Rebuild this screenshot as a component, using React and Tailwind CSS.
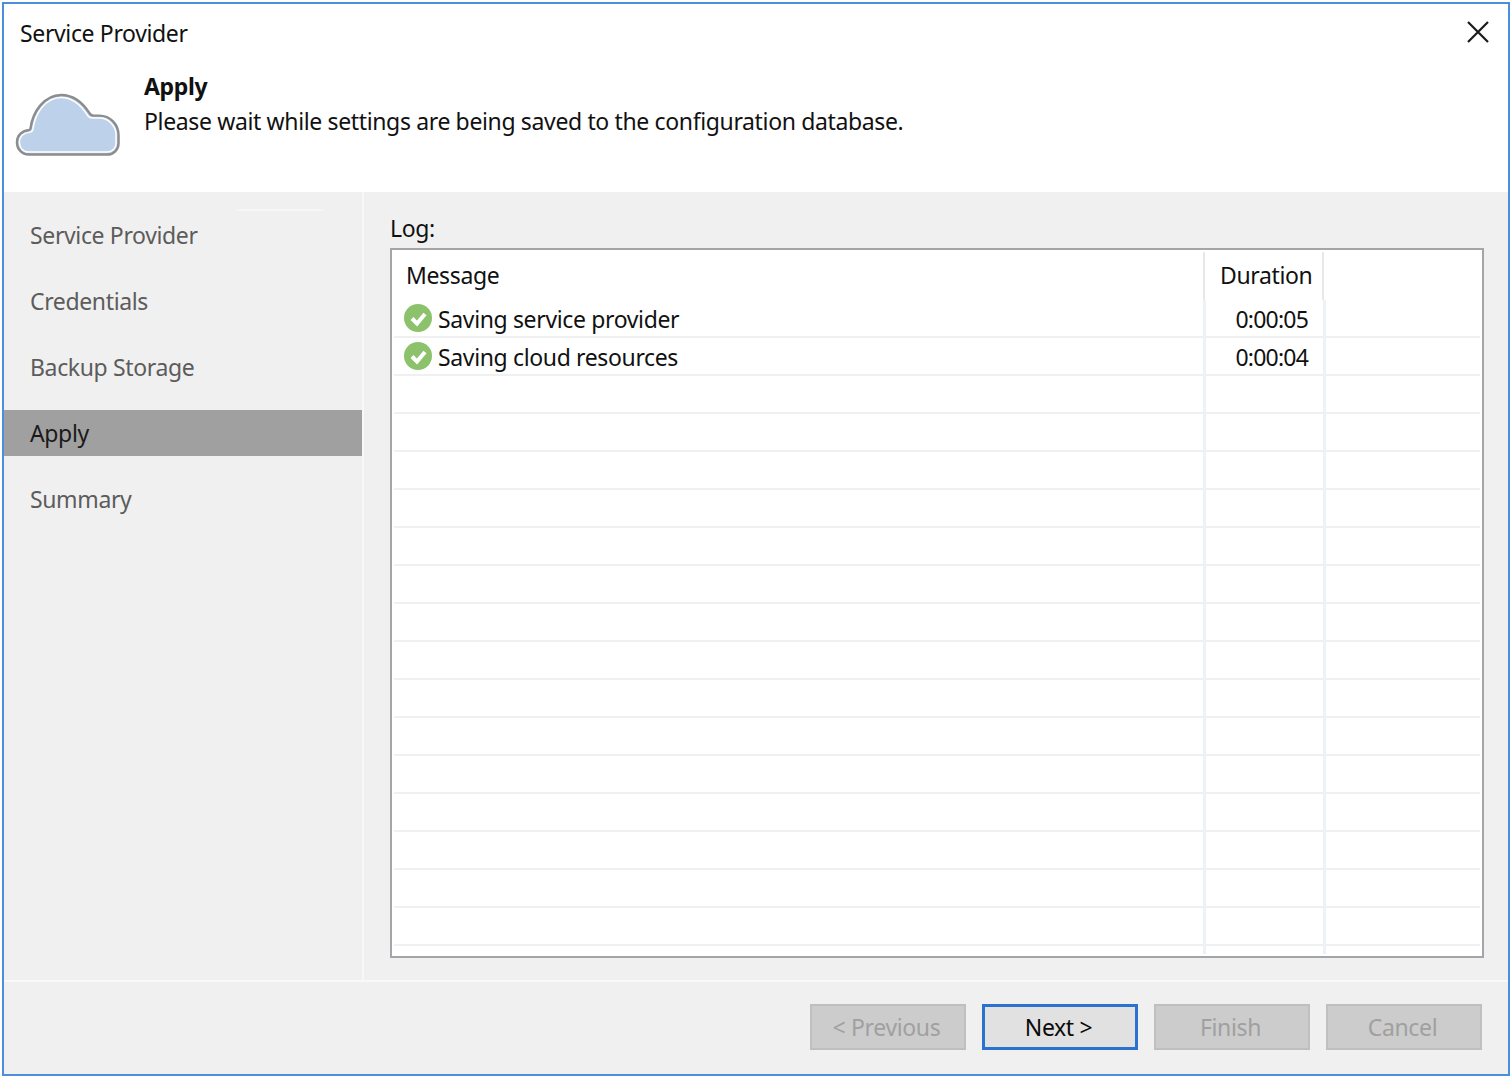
import React from "react";

const navItems = ["Service Provider", "Credentials", "Backup Storage", "Apply", "Summary"];
const logRows = [
    { message: "Saving service provider", duration: "0:00:05" },
    { message: "Saving cloud resources", duration: "0:00:04" },
    ...Array.from({ length: 15 }, () => ({})),
];

function CloudIcon() {
    return (
        <svg width="106" height="65" viewBox="0 0 108 66" fill="none" preserveAspectRatio="none" className="-ml-[1px]">
            <path
                d="M14 63.500C7 63.500 2 58 2 51C2 44 7.500 39 14.500 38.500C15 38.400 15.500 38 15.800 37C18 20 30 3 47 3C60 3 69 11 75.500 21C76.500 22.800 78 24 80 24H86C97 24 105.500 33 105.500 44V52C105.500 58.500 100.500 63.500 94 63.500Z"
                fill="#bdd2ea"
                stroke="#8d8d8d"
                strokeWidth="2.500"
            />
            <path
                d="M14 61C8 61 4.500 56.500 4.500 51C4.500 45.500 8.500 41.200 14.500 41C16.500 40.900 18 39.500 18.300 37.500C20.500 21.500 31 5.500 47 5.500C59 5.500 67 13 73.500 23C74.500 25 77 26.500 80 26.500H86C95.500 26.500 103 34.500 103 44V52C103 57 99 61 94 61Z"
                stroke="#ffffff"
                strokeWidth="1.500"
            />
        </svg>
    );
}

function CheckIcon() {
    return (
        <svg width="28" height="28" viewBox="0 0 28 28" className="shrink-0">
            <circle cx="14" cy="14" r="14" fill="#8cc26b" />
            <path d="M8 14.500L13 19.500L21 10" fill="none" stroke="#ffffff" strokeWidth="4" />
        </svg>
    );
}

function WizardButton({ label, primary }) {
    return primary ? (
        <button className="w-[156px] h-[46px] pr-[3px] bg-[#e1e1e1] border-[3px] border-[#2b71cf] text-[#0a0a0a]">{label}</button>
    ) : (
        <button className="w-[156px] h-[46px] pr-[3px] bg-[#cccccc] border-2 border-[#bfbfbf] text-[#a0a0a0]">{label}</button>
    );
}

export default function App() {
    return (
        <div className="w-[1510px] h-[1076px] bg-white pl-[2px] pt-[2px] text-[23px] leading-[32px] tracking-[-0.36px] text-[#111111] font-['Noto_Sans',sans-serif] overflow-hidden">
            <div className="w-[1508px] h-[1074px] flex flex-col border-2 border-[#4a8fdc]">
                {/* title + page heading */}
                <div className="h-[188px] shrink-0 bg-white flex flex-col">
                    <div className="h-[56px] shrink-0 flex items-center justify-between pl-[16px] pr-[18px]">
                        <span className="pt-[1px]">Service Provider</span>
                        <svg width="24" height="24" viewBox="0 0 24 24" fill="none" stroke="#1a1a1a" strokeWidth="2.200" className="mb-[1px]">
                            <path d="M2 2L22 22M22 2L2 22" />
                        </svg>
                    </div>
                    <div className="flex pl-[12px]">
                        <div className="w-[128px] shrink-0 pt-[32px]">
                            <CloudIcon />
                        </div>
                        <div className="flex flex-col pt-[10px] gap-[3px]">
                            <span className="font-bold">Apply</span>
                            <span>Please wait while settings are being saved to the configuration database.</span>
                        </div>
                    </div>
                </div>

                <div className="flex-1 flex min-h-0 bg-[#f0f0f0]">
                    {/* steps */}
                    <div className="w-[358px] shrink-0 flex flex-col text-[#5c5c5c]">
                        <div className="h-[2px] w-[88px] ml-[232px] mt-[17px] bg-[#f6f6f6]" />
                        <div className="flex flex-col gap-[20px] mt-[1px]">
                            {navItems.map((item) => (
                                <div
                                    key={item}
                                    className={item === "Apply" ? "h-[46px] flex items-center pl-[26px] bg-[#a0a0a0] text-[#1a1a1a]" : "h-[46px] flex items-center pl-[26px]"}
                                >
                                    {item}
                                </div>
                            ))}
                        </div>
                    </div>

                    {/* log */}
                    <div className="flex-1 flex flex-col border-l-2 border-[#f8f8f8] pl-[26px] pr-[24px] pt-[20px]">
                        <div className="h-[36px] leading-[32px]">Log:</div>
                        <div className="h-[710px] border-2 border-[#a3a5a8] bg-white px-[2px] pt-[2px] overflow-hidden">
                            <div className="flex h-[48px]">
                                <div className="w-[811px] pl-[12px] pt-[7px] border-r-2 border-[#e8e8e8]">Message</div>
                                <div className="w-[119px] pl-[15px] pt-[7px] border-r-2 border-[#e8e8e8]">Duration</div>
                            </div>
                            {logRows.map((row, i) => (
                                <div key={i} className="flex h-[38px] border-b-2 border-[#f0f0f0]">
                                    <div className="w-[812px] flex items-center gap-[6px] pl-[10px] border-r-[3px] border-[#edf2f9]">
                                        {row.message && <CheckIcon />}
                                        <span className="pt-[2px]">{row.message}</span>
                                    </div>
                                    <div className="w-[120px] flex items-center justify-end pr-[15px] tracking-[-0.8px] border-r-[3px] border-[#edf2f9]">
                                        <span className="pt-[2px]">{row.duration}</span>
                                    </div>
                                </div>
                            ))}
                            <div className="flex h-[8px]">
                                <div className="w-[812px] border-r-[3px] border-[#edf2f9]" />
                                <div className="w-[120px] border-r-[3px] border-[#edf2f9]" />
                            </div>
                        </div>
                    </div>
                </div>

                {/* footer */}
                <div className="h-[94px] shrink-0 bg-[#f0f0f0] border-t-2 border-[#f9f9f9] flex items-start justify-end gap-[16px] pt-[22px] pr-[26px]">
                    <WizardButton label="< Previous" />
                    <WizardButton label="Next >" primary />
                    <WizardButton label="Finish" />
                    <WizardButton label="Cancel" />
                </div>
            </div>
        </div>
    );
}
